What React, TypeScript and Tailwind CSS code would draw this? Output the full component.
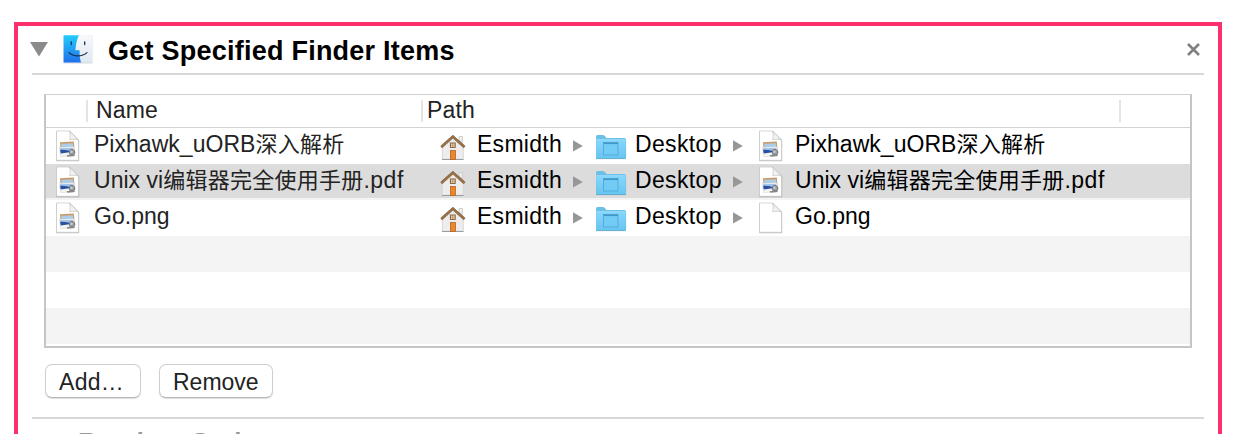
function Finder() {
  return (
    <svg width="31" height="30" viewBox="0 0 31 30" className="ml-[15px] shrink-0">
      <defs>
        <linearGradient id="fb" x1="0" y1="0" x2="0" y2="1">
          <stop offset="0" stopColor="#22cdfb" />
          <stop offset="1" stopColor="#2070ea" />
        </linearGradient>
        <linearGradient id="fw" x1="0" y1="0" x2="0" y2="1">
          <stop offset="0" stopColor="#f8f9fb" />
          <stop offset="1" stopColor="#dfe8f2" />
        </linearGradient>
      </defs>
      <rect x="1.4" y="1.4" width="29" height="28" rx="1" fill="#d3d7dd" />
      <rect x="1.6" y="1.200" width="28.4" height="27.2" rx="1" fill="url(#fw)" />
      <path d="M1.600 1.200h15.200c-2 4.500-3 9.500-3.400 15h4.200c-.1 5 .3 8.800 1.400 12.200H1.600z" fill="url(#fb)" />
      <path d="M9.200 8v2.600M22.700 8v2.600" stroke="#16324e" strokeWidth="1.300" strokeLinecap="round" />
      <path d="M7 18.600c4.500 4.400 13 4.400 18 0" fill="none" stroke="#162b42" strokeWidth="1.200" strokeLinecap="round" />
    </svg>
  );
}

function Doc({ preview = true }: { preview?: boolean }) {
  return (
    <svg width="26" height="32" viewBox="0 0 26 32" className="shrink-0">
      <defs>
        <linearGradient id="fold" x1="0" y1="1" x2="1" y2="0">
          <stop offset="0" stopColor="#fff" />
          <stop offset="1" stopColor="#dcdcdc" />
        </linearGradient>
      </defs>
      <path d="M1.200 2h14l9 8.500v20.700h-23z" fill="#888" opacity=".5" />
      <path d="M1.500 1h13l9 9v20.300h-22z" fill="#fff" stroke="#c4c4c4" strokeWidth=".7" />
      <path d="M14.500 1c1 3 .9 5.800.2 8.600 3-.7 6-.6 8.800.4z" fill="url(#fold)" stroke="#bdbdbd" strokeWidth=".7" />
      {preview && (
        <g>
          <path d="M5 12.200l13.800-.6.7 8-13.800 1.400z" fill="#c99a62" />
          <path d="M6.200 13.700l11.700-.5.500 5-11.600.9z" fill="#a9cdea" />
          <path d="M4.200 17.300l14.500-.5 1.300 8.700-14.200 1.200z" fill="#f3f3f3" stroke="#cbcbcb" strokeWidth=".4" />
          <path d="M5 18.300l12.800-.4.500 3.300-12.700.9z" fill="#9cbde8" />
          <path d="M5.200 19.800c4.600-.2 8 .5 11 2.100L5.700 23.500z" fill="#2b4fa0" />
          <circle cx="17" cy="22.300" r="2.900" fill="#9b9ea4" stroke="#6b6b6f" strokeWidth=".8" />
          <circle cx="16.400" cy="21.700" r="1.300" fill="#c4c9d1" />
          <path d="M11.500 25.200l7-.8 1.500 1.500-7.500.9z" fill="#858585" />
        </g>
      )}
    </svg>
  );
}

function House() {
  return (
    <svg width="28" height="28" viewBox="0 0 28 28" className="shrink-0">
      <path d="M20 3.500h3.500V10L20 7z" fill="#ececec" stroke="#c4c4c4" strokeWidth=".7" />
      <path d="M3 13L14 3l10.500 10v13.500H3z" fill="#ededed" />
      <path d="M3.300 14v12.200h21V14" fill="none" stroke="#cfcfcf" strokeWidth=".7" />
      <path d="M3 26.500h21.500" stroke="#9b9b9b" />
      <path d="M2.200 14.200L13.900 3.800l11.700 10.400" fill="none" stroke="#96724c" strokeWidth="2.800" />
      <path d="M2 12.700L13.900 2.300l11.700 10.400" fill="none" stroke="#765331" strokeWidth=".5" />
      <rect x="11.400" y="10" width="4.800" height="4.400" fill="#f7e5cb" stroke="#845c36" />
      <path d="M13.800 10v4.400M11.400 12.200h4.800" stroke="#845c36" strokeWidth=".5" />
      <rect x="11.400" y="17.500" width="5" height="9" fill="#ed8627" stroke="#b46527" strokeWidth=".8" />
    </svg>
  );
}

function Folder() {
  return (
    <svg width="32" height="26" viewBox="0 0 32 26" className="shrink-0">
      <defs>
        <linearGradient id="fo" x1="0" y1="0" x2="0" y2="1">
          <stop offset="0" stopColor="#86d6fb" />
          <stop offset="1" stopColor="#67c5f1" />
        </linearGradient>
      </defs>
      <path d="M1 24.300V2.500q0-1.500 1.500-1.500h5.500q1 0 1.700.8l1.700 2.200h18q1.700 0 1.700 1.700v18.600z" fill="#6cc0e8" />
      <path d="M1.300 6.200h29.200v18q0 .3-.5.300H1.800q-.5 0-.5-.3z" fill="url(#fo)" />
      <path d="M1.300 5.800h29.200" stroke="#a4e3ff" />
      <path d="M1 24.600h29.800" stroke="#579fc4" strokeWidth=".8" />
      <rect x="8.500" y="8.500" width="14.500" height="12.500" fill="#72cbf4" stroke="#4ba6d4" strokeWidth=".8" />
      <path d="M8.500 9.300h14.500" stroke="#3f98c9" strokeWidth="1.500" />
    </svg>
  );
}

function Arrow() {
  return (
    <svg width="10" height="12" viewBox="0 0 10 12" className="shrink-0">
      <path d="M0 .3L9.800 5.900 0 11.500z" fill="#979797" />
    </svg>
  );
}

type FileName = { latin: string; han?: string; ext?: string };

function NameText({ file }: { file: FileName }) {
  return (
    <span className="-mt-[4px] block shrink-0 leading-8 tracking-[0.03px]">
      {file.latin}
      {file.han && <span className="text-[22px] leading-none tracking-[0.24px]">{file.han}</span>}
      {file.ext && <span className="tracking-[0.5px]">{file.ext}</span>}
    </span>
  );
}

function Row({ file, selected, plain }: { file: FileName; selected?: boolean; plain?: boolean }) {
  return (
    <div className={`flex h-9 items-center whitespace-pre ${selected ? "border-b-2 border-[#f4f4f4] bg-[#dcdcdc] *:translate-y-px" : ""}`}>
      <div className="flex w-[393px] items-center pl-[9px]">
        <Doc />
        <div className="ml-[13px] text-[#232323]"><NameText file={file} /></div>
      </div>
      <div className="flex items-center text-black">
        <div className="mt-[2px] flex w-[38px]"><House /></div>
        <span className="-mt-[4px] w-[96px] leading-8 tracking-[0.28px]">Esmidth</span>
        <Arrow />
        <div className="mt-[2px] ml-[12px] flex w-[40px]"><Folder /></div>
        <span className="-mt-[4px] w-[98px] leading-8 tracking-[0.35px]">Desktop</span>
        <Arrow />
        <div className="ml-[15px] flex w-[37px]"><Doc preview={!plain} /></div>
        <NameText file={file} />
      </div>
    </div>
  );
}

export default function App() {
  return (
    <div className="h-[434px] overflow-hidden bg-white px-[14px] pt-[22px] font-['Liberation_Sans','Noto_Sans_CJK_SC',sans-serif] text-[23px] text-[#232323]">
      <section className="h-[460px] border-4 border-[#fb306c] px-[14px]">
        <header className="flex h-[49px] items-start border-b-2 border-[#d8d8d8] pt-[8px]">
          <svg width="18" height="15" viewBox="0 0 18 15" className="mt-[8px] -mr-px -ml-[2px] shrink-0">
            <path d="M0 0h18L9 14.500z" fill="#8b8b8b" />
          </svg>
          <Finder />
          <h1 className="ml-[15px] text-[27px] leading-[34px] font-bold tracking-[0.24px] whitespace-nowrap text-black">Get Specified Finder Items</h1>
          <svg width="15" height="15" viewBox="0 0 15 15" className="mt-[8px] mr-[3px] ml-auto">
            <path d="M2 2l11 11M13 2L2 13" stroke="#808080" strokeWidth="2.600" />
          </svg>
        </header>

        <div className="mx-[12px] mt-[19px] h-[254px] border-x-2 border-t border-b-2 border-[#c5c5c5] border-t-[#d0d0d0]">
          <div className="flex h-[33px] items-center border-b border-[#d3d3d3] leading-8 tracking-[0.15px]">
            <div className="h-[22px] w-[42px] border-r-2 border-[#e4e4e4]" />
            <div className="flex h-[22px] w-[335px] items-center border-r-2 border-[#e4e4e4] pb-[2px] pl-[8px]">Name</div>
            <div className="flex h-[22px] w-[698px] items-center border-r-2 border-[#e4e4e4] pb-[2px] pl-[4px]">Path</div>
          </div>
          <Row file={{ latin: "Pixhawk_uORB", han: "深入解析" }} />
          <Row file={{ latin: "Unix vi", han: "编辑器完全使用手册", ext: ".pdf" }} selected />
          <Row file={{ latin: "Go.png" }} plain />
          <div className="h-9 bg-[#f4f4f4]" />
          <div className="h-9" />
          <div className="h-9 bg-[#f4f4f4]" />
        </div>

        <div className="mx-[13px] mt-[16px] flex gap-[18px]">
          <button className="h-[34px] w-24 rounded-[7px] border border-[#cfcfcf] border-b-[#b8b8b8] bg-white pt-px pl-[13px] text-left leading-8 tracking-[0.3px] shadow-[0_1px_1px_#0002]">Add…</button>
          <button className="h-[34px] w-[114px] rounded-[7px] border border-[#cfcfcf] border-b-[#b8b8b8] bg-white pt-px pl-[13px] text-left leading-8 shadow-[0_1px_1px_#0002]">Remove</button>
        </div>
        <div className="mt-[19px] border-t-2 border-[#d8d8d8] pt-[6px] pl-[46px] text-[26px] leading-[34px] font-bold tracking-[0.3px] whitespace-nowrap text-[#999]">Random Script</div>
      </section>
    </div>
  );
}
